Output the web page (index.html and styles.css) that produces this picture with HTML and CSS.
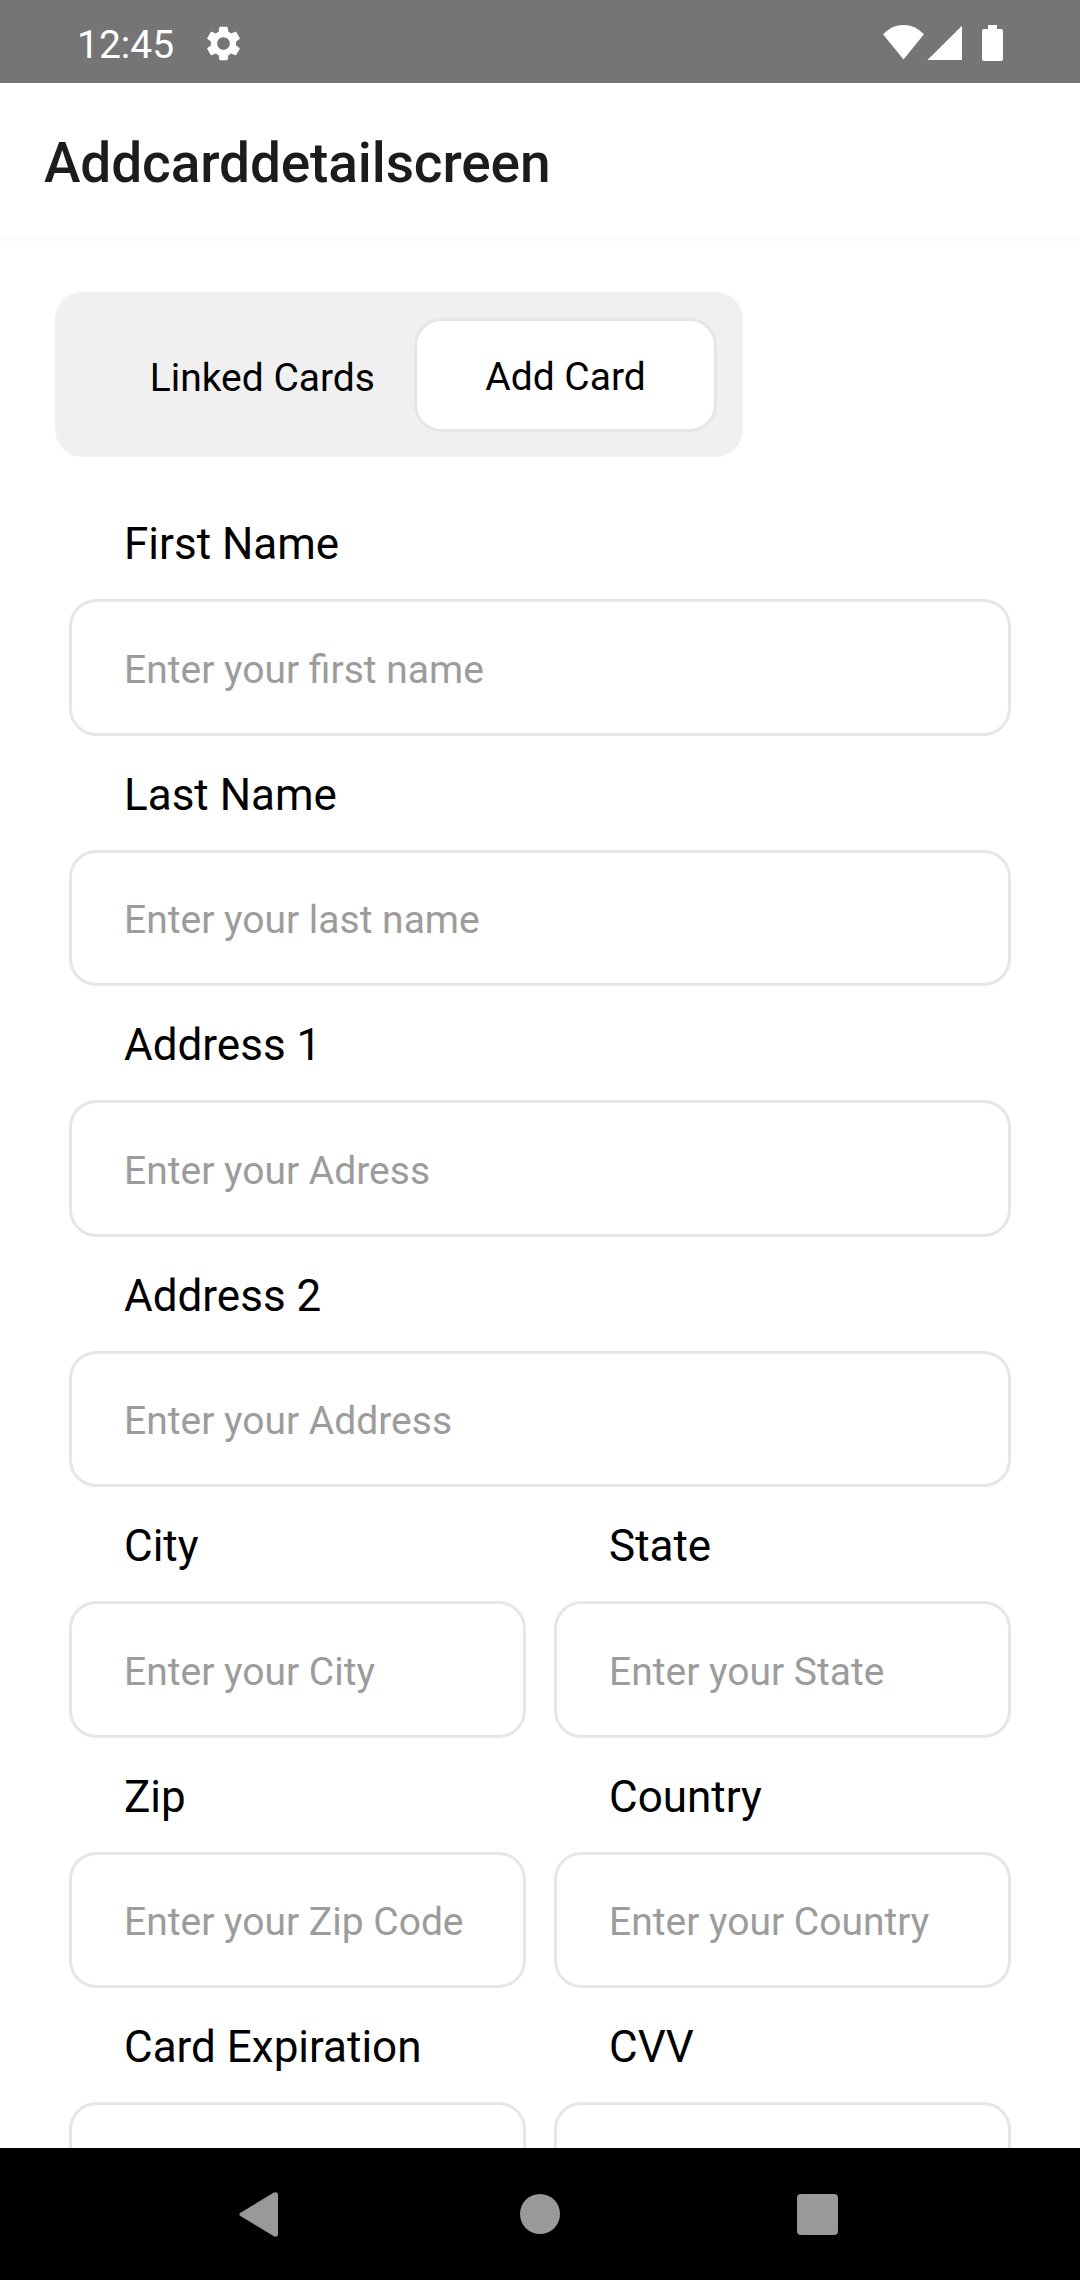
FILE: index.html
```html
<!DOCTYPE html>
<html lang="en">
<head>
<meta charset="utf-8">
<title>Addcarddetailscreen</title>
<link rel="stylesheet" href="styles.css">
</head>
<body>
<div class="screen">
  <div class="status-bar">
    <span class="clock">12:45</span>
    <svg class="gear" viewBox="2 2 20 20"><path fill="#fff" d="M19.14 12.94c.04-.3.06-.61.06-.94 0-.32-.02-.64-.07-.94l2.03-1.58c.18-.14.23-.41.12-.61l-1.92-3.32c-.12-.22-.37-.29-.59-.22l-2.39.96c-.5-.38-1.03-.7-1.62-.94l-.36-2.54c-.04-.24-.24-.41-.48-.41h-3.84c-.24 0-.43.17-.47.41l-.36 2.54c-.59.24-1.13.57-1.62.94l-2.39-.96c-.22-.08-.47 0-.59.22L2.74 8.87c-.12.21-.08.47.12.61l2.03 1.58c-.05.3-.09.63-.09.94s.02.64.07.94l-2.03 1.58c-.18.14-.23.41-.12.61l1.92 3.32c.12.22.37.29.59.22l2.39-.96c.5.38 1.03.7 1.62.94l.36 2.54c.05.24.24.41.48.41h3.84c.24 0 .44-.17.47-.41l.36-2.54c.59-.24 1.13-.56 1.62-.94l2.39.96c.22.08.47 0 .59-.22l1.92-3.32c.12-.22.07-.47-.12-.61l-2.01-1.58zM12 15.6c-1.98 0-3.6-1.62-3.6-3.6s1.62-3.6 3.6-3.6 3.6 1.62 3.6 3.6-1.62 3.6-3.6 3.6z"/></svg>
    <svg class="signals" viewBox="0 0 121 36" fill="#fff">
      <path d="M0 9.3Q9 0 20.5 0T41 9.3L20.5 34.5Z"/>
      <path d="M44.5 35H79V.8Z"/>
      <path d="M105 0h9v4h4a2 2 0 0 1 2 2v28a2 2 0 0 1-2 2h-17a2 2 0 0 1-2-2V6a2 2 0 0 1 2-2h4Z"/>
    </svg>
  </div>
  <header class="app-bar"><h1 class="title">Addcarddetailscreen</h1></header>
  <main class="content">
    <div class="tabs">
      <span class="tab">Linked Cards</span>
      <span class="tab tab-active">Add Card</span>
    </div>
    <form class="form">
      <label class="field wide"><span class="label">First Name</span><input class="input" placeholder="Enter your first name"></label>
      <label class="field wide"><span class="label">Last Name</span><input class="input" placeholder="Enter your last name"></label>
      <label class="field wide"><span class="label">Address 1</span><input class="input" placeholder="Enter your Adress"></label>
      <label class="field wide"><span class="label">Address 2</span><input class="input" placeholder="Enter your Address"></label>
      <label class="field"><span class="label">City</span><input class="input" placeholder="Enter your City"></label>
      <label class="field"><span class="label">State</span><input class="input" placeholder="Enter your State"></label>
      <label class="field"><span class="label">Zip</span><input class="input" placeholder="Enter your Zip Code"></label>
      <label class="field"><span class="label">Country</span><input class="input" placeholder="Enter your Country"></label>
      <label class="field"><span class="label">Card Expiration</span><input class="input"></label>
      <label class="field"><span class="label">CVV</span><input class="input"></label>
    </form>
  </main>
  <nav class="nav-bar">
    <svg class="nav-icon" viewBox="0 0 46 46"><path fill="#999" d="M1.500 21.800 34.500 1.800Q39 0 39 4V43Q39 47 34.500 45L1.500 25Q-.8 23.400 1.500 21.800Z"/></svg>
    <svg class="nav-icon" viewBox="0 0 46 46"><circle cx="23" cy="23" r="20" fill="#999"/></svg>
    <svg class="nav-icon" viewBox="0 0 46 46"><rect x="2" y="3" width="41" height="41" rx="4" fill="#999"/></svg>
  </nav>
</div>
</body>
</html>
```
FILE: styles.css
```css
* { box-sizing: border-box; }

body {
  margin: 0;
  font-family: Roboto, sans-serif;
  color: #000;
}

.screen {
  display: flex;
  flex-direction: column;
  width: 1080px;
  height: 2280px;
  overflow: hidden;
  background: #fff;
}

.status-bar {
  flex: none;
  display: flex;
  align-items: center;
  height: 83px;
  padding: 3px 76px 0 77px;
  background: #757575;
}

.clock {
  width: 129px;
  font-size: 39px;
  line-height: 46px;
  color: #fff;
  padding-top: 4px;
}

.gear { width: 35px; height: 35px; }

.signals {
  width: 121px;
  height: 36px;
  margin-left: auto;
}

.app-bar {
  flex: none;
  display: flex;
  align-items: center;
  height: 154px;
  padding: 6px 44px 0;
  background: #fff;
  box-shadow: 0 3px 8px rgba(0, 0, 0, 0.018);
}

.title {
  margin: 0;
  font-size: 55px;
  font-weight: 500;
  line-height: 64px;
  letter-spacing: -0.12px;
  color: #1c1c1e;
}

.content {
  flex: 1;
  min-height: 0;
  overflow: hidden;
  padding: 55px 69px 0;
}

.tabs {
  display: flex;
  align-items: center;
  justify-content: flex-end;
  gap: 39px;
  width: 688px;
  height: 165px;
  margin-left: -14px;
  padding-right: 26px;
  border-radius: 27.5px;
  background: #f0f0f0;
}

.tab {
  font-size: 39px;
  line-height: 46px;
  padding-top: 6px;
}

.tab-active {
  width: 303px;
  height: 114px;
  padding-top: 33px;
  border: 3px solid #e6e6e6;
  border-radius: 27.5px;
  background: #fff;
  text-align: center;
}

.form {
  display: grid;
  grid-template-columns: 1fr 1fr;
  column-gap: 28px;
  grid-auto-rows: 250.5px;
  padding-top: 28.3px;
}

.field {
  display: flex;
  flex-direction: column;
}

.wide { grid-column: span 2; }

.label {
  height: 114px;
  padding: 33px 55px 0;
  font-size: 44px;
  line-height: 52px;
}

.input {
  width: 100%;
  height: 137px;
  padding: 5px 50px 0 52px;
  border: 3px solid #e6e6e6;
  border-radius: 27.5px;
  outline: none;
  background: transparent;
  font: 39px/46px Roboto, sans-serif;
}

.input::placeholder { color: #9c9c9c; opacity: 1; }

.nav-bar {
  flex: none;
  display: grid;
  grid-template-columns: repeat(3, 46px);
  justify-content: center;
  align-items: center;
  column-gap: 232px;
  height: 132px;
  background: #000;
}

.nav-icon { width: 46px; height: 46px; overflow: visible; }
```
